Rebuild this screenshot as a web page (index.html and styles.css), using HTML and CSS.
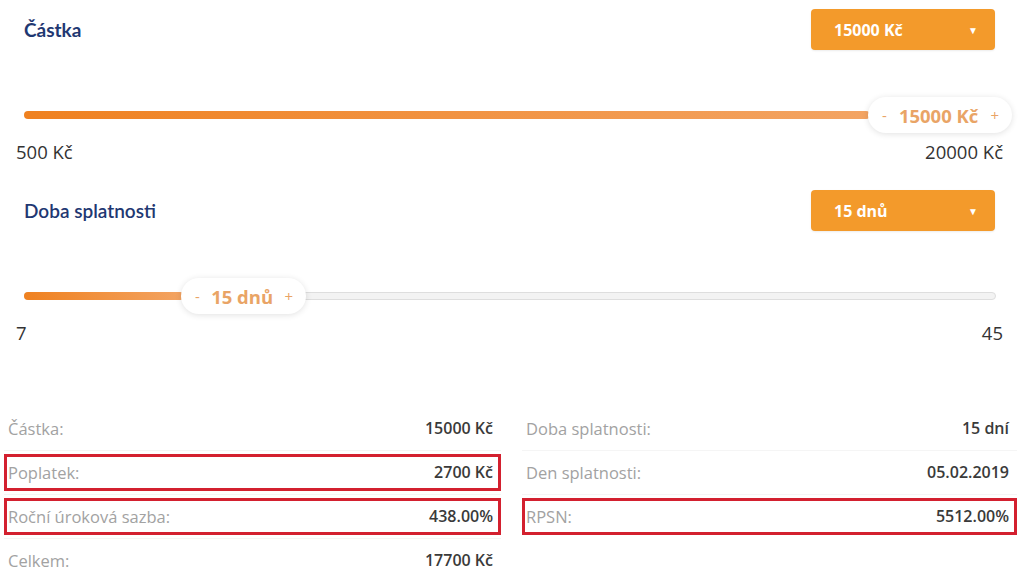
FILE: index.html
```html
<!DOCTYPE html>
<html lang="cs">
<head>
<meta charset="utf-8">
<title>Kalkulačka</title>
<link rel="stylesheet" href="styles.css">
</head>
<body>
<div class="calc">
  <section class="block">
    <div class="head">
      <h2 class="title">Částka</h2>
      <div class="select"><span>15000 Kč</span><span class="arrow">▼</span></div>
    </div>
    <div class="slider">
      <div class="fill fill-full"></div>
      <div class="thumb thumb-amount"><span class="pm">-</span><span class="val">15000 Kč</span><span class="pm">+</span></div>
    </div>
    <div class="range"><span>500 Kč</span><span>20000 Kč</span></div>
  </section>

  <section class="block block-2">
    <div class="head">
      <h2 class="title">Doba splatnosti</h2>
      <div class="select"><span>15 dnů</span><span class="arrow">▼</span></div>
    </div>
    <div class="slider slider-grey">
      <div class="fill fill-days"></div>
      <div class="thumb thumb-days"><span class="pm">-</span><span class="val">15 dnů</span><span class="pm">+</span></div>
    </div>
    <div class="range"><span>7</span><span>45</span></div>
  </section>

  <div class="summary">
    <div class="col">
      <div class="cell"><div class="row"><span class="lbl">Částka:</span><span class="v">15000 Kč</span></div></div>
      <div class="cell"><div class="row hl"><span class="lbl">Poplatek:</span><span class="v">2700 Kč</span></div></div>
      <div class="cell"><div class="row hl"><span class="lbl">Roční úroková sazba:</span><span class="v">438.00%</span></div></div>
      <div class="cell"><div class="row"><span class="lbl">Celkem:</span><span class="v">17700 Kč</span></div></div>
    </div>
    <div class="col">
      <div class="cell"><div class="row"><span class="lbl">Doba splatnosti:</span><span class="v">15 dní</span></div></div>
      <div class="cell"><div class="row"><span class="lbl">Den splatnosti:</span><span class="v">05.02.2019</span></div></div>
      <div class="cell"><div class="row hl"><span class="lbl">RPSN:</span><span class="v">5512.00%</span></div></div>
    </div>
  </div>
</div>
</body>
</html>
```

FILE: styles.css
```css
* { box-sizing: border-box; }
html, body { margin: 0; padding: 0; background: #fff; }
body {
  font-family: "Open Sans", "Liberation Sans", sans-serif;
  color: #333;
  width: 1024px;
  height: 581px;
  overflow: hidden;
}
.calc { padding-top: 9px; }
.block-2 { margin-top: 27px; }
.head {
  display: flex;
  justify-content: space-between;
  align-items: center;
  height: 41px;
  padding: 0 29px 0 24px;
}
.title {
  margin: 0;
  font-family: Lato, "Open Sans", sans-serif;
  font-weight: 700;
  font-size: 19px;
  color: #1f3872;
}
.block-2 .title { font-weight: 600; }
.select {
  width: 184px;
  height: 41px;
  background: #f39a2b;
  border-radius: 4px;
  display: flex;
  align-items: center;
  justify-content: space-between;
  padding: 0 17px 0 23px;
  color: #fff;
  font-weight: 700;
  font-size: 16px;
  box-shadow: 0 1px 2px rgba(0,0,0,0.08);
}
.arrow { font-size: 10px; }
.slider {
  position: relative;
  margin: 61px 28px 0 24px;
  height: 8px;
  border-radius: 4px;
}
.slider-grey {
  background: #f3f3f3;
  border: 1px solid #dedede;
}
.fill {
  height: 8px;
  border-radius: 4px;
  background: linear-gradient(to right, #ef8120, #f3a463);
}
.slider-grey .fill { margin: -1px 0 0 -1px; }
.fill-full { width: 846px; }
.fill-days { width: 160px; }
.thumb {
  position: absolute;
  top: 50%;
  transform: translateY(-50%);
  height: 36px;
  background: #fff;
  border-radius: 18px;
  box-shadow: 0 1px 6px rgba(0,0,0,0.12);
  display: flex;
  align-items: center;
  justify-content: space-between;
  padding: 0 13px 0 14px;
  color: #e9a466;
}
.thumb-amount { left: 844px; width: 144px; }
.thumb-days { left: 156px; width: 125px; }
.pm { font-size: 15px; font-weight: 400; }
.val { font-size: 18.5px; font-weight: 700; }
.range {
  display: flex;
  justify-content: space-between;
  padding: 0 21px 0 16px;
  margin-top: 22px;
  font-size: 18.5px;
  font-weight: 500;
  line-height: 22px;
  color: #333;
}
.summary {
  display: grid;
  grid-template-columns: 497px 495px;
  column-gap: 21px;
  padding-left: 4px;
  margin-top: 62.5px;
}
.cell {
  padding: 3px 0;
  border-bottom: 1px solid #f5f5f5;
}
.col .cell:last-child { border-bottom-color: transparent; }
.row {
  height: 37px;
  border: 3px solid transparent;
  display: flex;
  align-items: center;
  justify-content: space-between;
  padding: 0 5px 0 1px;
}
.row.hl { border-color: #d3202f; }
.lbl { font-size: 16.5px; color: #a2a2a2; }
.v { font-size: 16px; font-weight: 600; color: #3a3a3a; }
```
